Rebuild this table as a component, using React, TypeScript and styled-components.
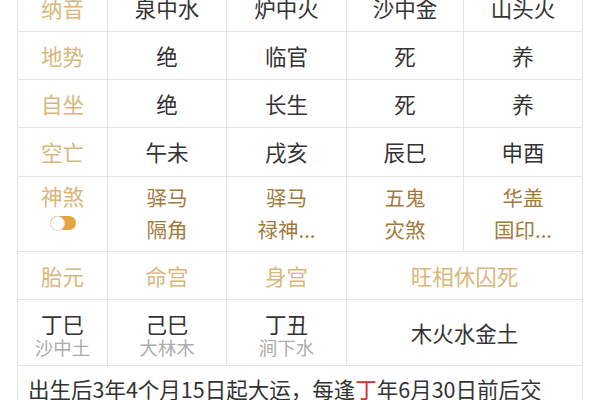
import React from "react";
import styled, { createGlobalStyle } from "styled-components";

const Global = createGlobalStyle`
  html, body { margin: 0; padding: 0; background: #fff; }
  body { font-family: "Noto Sans CJK SC", "Noto Sans", sans-serif; overflow: hidden; }
`;

const Page = styled.div`
  width: 600px;
  height: 400px;
  overflow: hidden;
  padding-left: 17px;
  box-sizing: border-box;
`;

const Grid = styled.div`
  margin-top: -17px;
  width: 566px;
  display: grid;
  grid-template-columns: 89px 118px 119px 116px 118px;
  grid-template-rows: 47px 47px 47px 48px 74px 47px 65px auto;
  gap: 1px;
  background: #e4e4e4;
  border: 1px solid #e4e4e4;
  box-sizing: border-box;
`;

const Cell = styled.div<{ $span?: number }>`
  background: #fff;
  display: flex;
  flex-direction: column;
  align-items: center;
  justify-content: center;
  grid-column: span ${(p) => p.$span ?? 1};
  font-size: 21.5px;
  color: #333;
  line-height: 1.2;
  min-width: 0;
`;

const Label = styled(Cell)`
  color: #d9b77c;
`;

const Sha = styled(Cell)`
  color: #a27a3c;
  font-size: 20.5px;
  line-height: 32px;
  justify-content: flex-start;
  padding-top: 4px;
`;

const ShaLabel = styled(Cell)`
  color: #d9b77c;
  justify-content: flex-start;
  padding-top: 6px;
  gap: 7px;
`;

const Toggle = styled.div`
  width: 26px;
  height: 14px;
  border-radius: 7px;
  background: #e6a440;
  position: relative;
  &::after {
    content: "";
    position: absolute;
    left: 0;
    top: 0;
    width: 13px;
    height: 13px;
    border-radius: 50%;
    background: #fff;
    border: 0.5px solid #ddd;
  }
`;

const Pillar = styled(Cell)`
  line-height: 24px;
  padding-top: 4px;
`;

const Sub = styled.div`
  font-size: 18.5px;
  line-height: 22px;
  color: #acacac;
`;

const Note = styled.div`
  grid-column: span 5;
  background: #fff;
  padding: 7px 28px 0 10px;
  font-size: 21.5px;
  line-height: 32px;
  color: #333;
  height: 60px;
  min-width: 0;
  word-break: break-all;
  overflow-wrap: anywhere;
`;

const Red = styled.span`
  color: #d3322d;
`;

const rows: [string, string[]][] = [
  ["纳音", ["泉中水", "炉中火", "沙中金", "山头火"]],
  ["地势", ["绝", "临官", "死", "养"]],
  ["自坐", ["绝", "长生", "死", "养"]],
  ["空亡", ["午未", "戌亥", "辰巳", "申酉"]],
];

const sha: [string, string][] = [
  ["驿马", "隔角"],
  ["驿马", "禄神..."],
  ["五鬼", "灾煞"],
  ["华盖", "国印..."],
];

const pillars: [string, string][] = [
  ["丁巳", "沙中土"],
  ["己巳", "大林木"],
  ["丁丑", "涧下水"],
];

export default function App() {
  return (
    <>
      <Global />
      <Page>
        <Grid>
          {rows.map(([l, vals]) => (
            <React.Fragment key={l}>
              <Label>{l}</Label>
              {vals.map((v, i) => (
                <Cell key={i}>{v}</Cell>
              ))}
            </React.Fragment>
          ))}
          <ShaLabel>
            <span>神煞</span>
            <Toggle />
          </ShaLabel>
          {sha.map(([a, b], i) => (
            <Sha key={i}>
              <span>{a}</span>
              <span>{b}</span>
            </Sha>
          ))}
          <Label>胎元</Label>
          <Label>命宫</Label>
          <Label>身宫</Label>
          <Label $span={2}>旺相休囚死</Label>
          {pillars.map(([a, b]) => (
            <Pillar key={a}>
              <span>{a}</span>
              <Sub>{b}</Sub>
            </Pillar>
          ))}
          <Cell $span={2}>木火水金土</Cell>
          <Note>
            出生后3年4个月15日起大运，每逢<Red>丁</Red>年6月30日前后交运
          </Note>
        </Grid>
      </Page>
    </>
  );
}
